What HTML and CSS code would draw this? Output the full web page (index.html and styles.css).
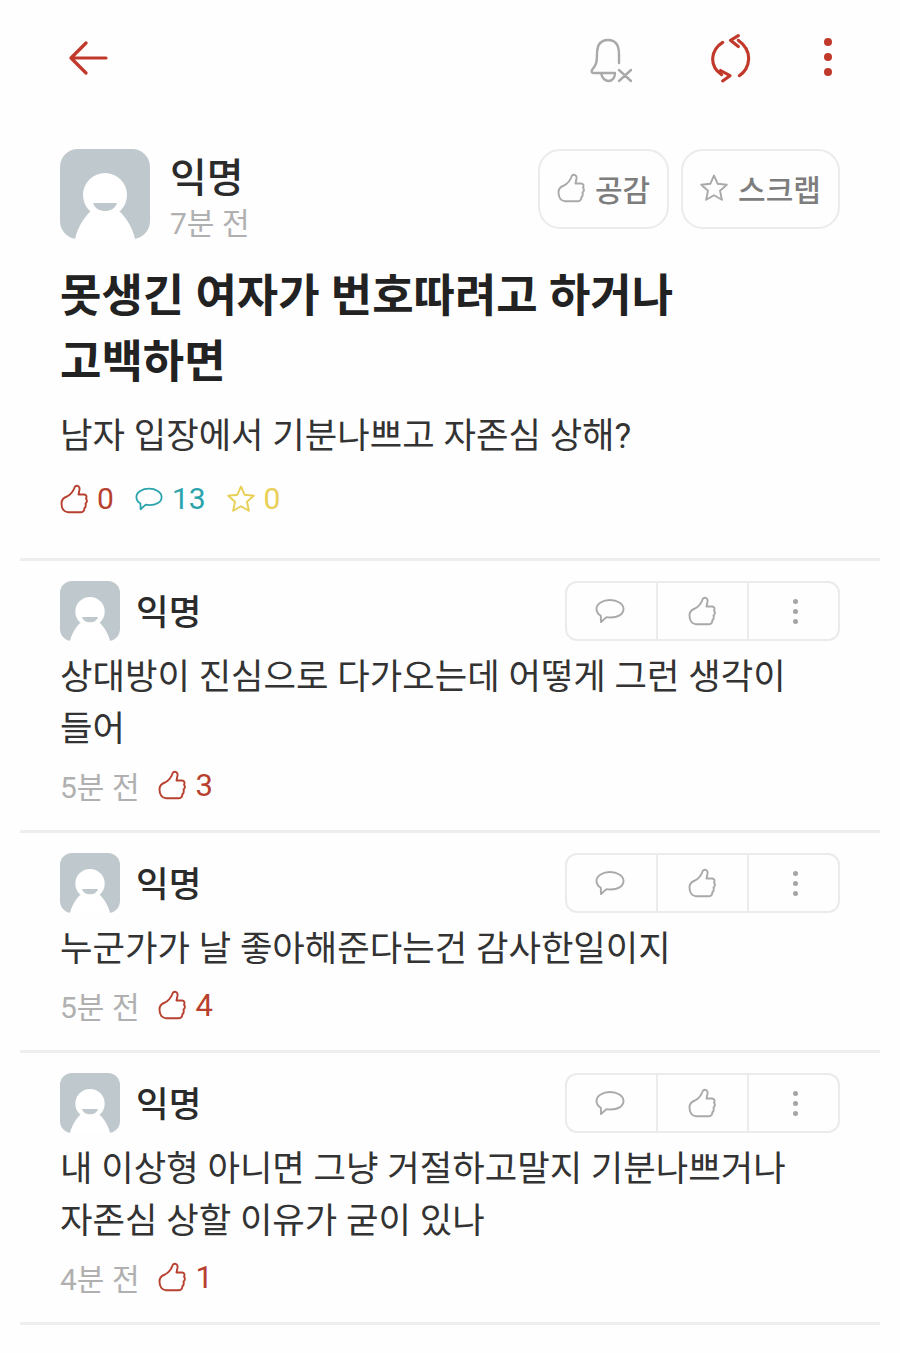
FILE: index.html
```html
<!DOCTYPE html>
<html lang="ko">
<head>
<meta charset="utf-8">
<title>익명</title>
<link rel="stylesheet" href="styles.css">
</head>
<body>
<svg class="defs" width="0" height="0" aria-hidden="true">
  <symbol id="thumb" viewBox="0 0 28 30"><path d="M1.500 19.500C1.500 15.500 4 13.500 7 12.500C11 10.500 13.500 7 15 2.500C17.500 .8 20 2.500 19.500 5.500L18.500 10.500L24 10.500C26.500 10.500 27 13 26 14.500C27.300 16.500 26.800 18.500 25.500 19.500C26 21.500 25.500 23.500 24.300 24.200C24.500 26.500 23 28.300 20.500 28.300L8 28.300C4 28.300 1.500 24.500 1.500 19.500Z" fill="none" stroke="currentColor" stroke-width="1.900" stroke-linejoin="round"/></symbol>
  <symbol id="bubble" viewBox="0 0 30 26"><path d="M15 2C22 2 28.500 5.500 28.500 11C28.500 16.500 22.500 19.500 15.500 19.500C14 19.500 12.500 19.400 11.500 19.100L6 24L5.800 17.700C3 16 1.500 13.800 1.500 11C1.500 5.500 8 2 15 2Z" fill="none" stroke="currentColor" stroke-width="1.900" stroke-linejoin="round"/></symbol>
  <symbol id="star" viewBox="1 1 28 28"><path d="M15 2.500L18.700 10.800L27.800 11.800L21 17.800L22.900 26.800L15 22.200L7.100 26.800L9 17.800L2.200 11.800L11.300 10.800Z" fill="none" stroke="currentColor" stroke-width="1.900" stroke-linejoin="round"/></symbol>
  <symbol id="avatar" viewBox="0 0 90 90"><rect width="90" height="90" rx="18" fill="#bfc8cc"/><circle cx="45" cy="46" r="22" fill="#fff"/><path d="M15 90C18 76 28 62 37 58L53 58C62 62 72 76 75 90Z" fill="#fff"/><path d="M33 54H57C55 60 50 62 45 62C40 62 35 60 33 54Z" fill="#bfc8cc"/></symbol>
</svg>

<header class="topbar">
  <svg class="icon-back" viewBox="0 0 40 34"><path d="M38 17H3M18 2L3 17L18 32" fill="none" stroke="currentColor" stroke-width="3.200" stroke-linecap="round" stroke-linejoin="round"/></svg>
  <div class="top-actions">
    <svg class="icon-bell" viewBox="0 0 46 46"><path d="M4 33C8 28 9 26 9 17C9 8 13 3 20 3C27 3 31 8 31 17V26M4 33C3 35 4 36 6 36H27M13 36C14 42 18 44 20.500 44C24 44 27 41 27 36M31 33L43 44M43 33L31 44" fill="none" stroke="currentColor" stroke-width="2.400" stroke-linecap="round" stroke-linejoin="round"/></svg>
    <svg class="icon-sync" viewBox="0 0 44 48"><path d="M14 9C3 16 0 31 13 40M12 36L21 41L14 46M30 41C40 34 44 18 29 7M29 2.500L21.500 7L29 13" fill="none" stroke="currentColor" stroke-width="3" stroke-linecap="round" stroke-linejoin="round"/></svg>
    <div class="dots dots-top"><i></i><i></i><i></i></div>
  </div>
</header>

<section class="post">
  <div class="post-head">
    <svg class="avatar-lg"><use href="#avatar"/></svg>
    <div class="post-author">
      <div class="author-name">익명</div>
      <div class="author-time">7분 전</div>
    </div>
    <div class="post-buttons">
      <button class="pill pill-like"><svg class="pill-icon"><use href="#thumb"/></svg>공감</button>
      <button class="pill pill-scrap"><svg class="pill-icon"><use href="#star"/></svg>스크랩</button>
    </div>
  </div>
  <h1 class="post-title">못생긴 여자가 번호따려고 하거나<br>고백하면</h1>
  <p class="post-body">남자 입장에서 기분나쁘고 자존심 상해?</p>
  <div class="post-stats">
    <span class="stat stat-red"><svg class="stat-icon"><use href="#thumb"/></svg>0</span>
    <span class="stat stat-teal"><svg class="stat-icon"><use href="#bubble"/></svg>13</span>
    <span class="stat stat-yellow"><svg class="stat-icon"><use href="#star"/></svg>0</span>
  </div>
</section>

<section class="comment">
  <div class="comment-head">
    <svg class="avatar-sm"><use href="#avatar"/></svg>
    <div class="comment-name">익명</div>
    <div class="comment-tools">
      <span class="tool"><svg class="tool-bubble"><use href="#bubble"/></svg></span>
      <span class="tool"><svg class="tool-thumb"><use href="#thumb"/></svg></span>
      <span class="tool"><span class="dots dots-sm"><i></i><i></i><i></i></span></span>
    </div>
  </div>
  <p class="comment-text">상대방이 진심으로 다가오는데 어떻게 그런 생각이<br>들어</p>
  <div class="comment-meta"><span class="meta-time">5분 전</span><span class="meta-like"><svg class="meta-icon"><use href="#thumb"/></svg>3</span></div>
</section>

<section class="comment">
  <div class="comment-head">
    <svg class="avatar-sm"><use href="#avatar"/></svg>
    <div class="comment-name">익명</div>
    <div class="comment-tools">
      <span class="tool"><svg class="tool-bubble"><use href="#bubble"/></svg></span>
      <span class="tool"><svg class="tool-thumb"><use href="#thumb"/></svg></span>
      <span class="tool"><span class="dots dots-sm"><i></i><i></i><i></i></span></span>
    </div>
  </div>
  <p class="comment-text">누군가가 날 좋아해준다는건 감사한일이지</p>
  <div class="comment-meta"><span class="meta-time">5분 전</span><span class="meta-like"><svg class="meta-icon"><use href="#thumb"/></svg>4</span></div>
</section>

<section class="comment">
  <div class="comment-head">
    <svg class="avatar-sm"><use href="#avatar"/></svg>
    <div class="comment-name">익명</div>
    <div class="comment-tools">
      <span class="tool"><svg class="tool-bubble"><use href="#bubble"/></svg></span>
      <span class="tool"><svg class="tool-thumb"><use href="#thumb"/></svg></span>
      <span class="tool"><span class="dots dots-sm"><i></i><i></i><i></i></span></span>
    </div>
  </div>
  <p class="comment-text">내 이상형 아니면 그냥 거절하고말지 기분나쁘거나<br>자존심 상할 이유가 굳이 있나</p>
  <div class="comment-meta"><span class="meta-time">4분 전</span><span class="meta-like"><svg class="meta-icon"><use href="#thumb"/></svg>1</span></div>
</section>
</body>
</html>
```

FILE: styles.css
```css
* { box-sizing: border-box; }
html, body { margin: 0; padding: 0; }
body {
  width: 900px;
  height: 1353px;
  overflow: hidden;
  background: #fefefe;
  color: #2b2b2b;
  font-family: "Roboto", "Noto Sans CJK KR", sans-serif;
}
.defs { display: block; height: 0; }
.topbar {
  height: 149px;
  padding: 41px 62px 0 68px;
  display: flex;
  justify-content: space-between;
  align-items: flex-start;
}
.icon-back { width: 40px; height: 34px; color: #c0392b; }
.top-actions { display: flex; align-items: flex-start; }
.icon-bell { width: 46px; height: 46px; color: #a9a9a9; margin-top: -4px; }
.icon-sync { width: 46px; height: 50px; color: #c0392b; margin: -8px 0 0 74px; }
.dots { display: flex; flex-direction: column; align-items: center; }
.dots i { display: block; border-radius: 50%; }
.dots-top { margin: -3px 6px 0 70px; gap: 7px; }
.dots-top i { width: 8px; height: 8px; background: #c0392b; }
.dots-sm { gap: 5px; margin-left: 3px; }
.dots-sm i { width: 5px; height: 5px; background: #a5a5a5; }

.post { height: 412px; margin: 0 20px; padding: 0 40px; border-bottom: 3px solid #eeeeee; }
.post-head { display: flex; align-items: flex-start; }
.avatar-lg { width: 90px; height: 90px; flex: none; }
.post-author { margin-left: 20px; padding-top: 5px; }
.author-name { font-size: 40px; line-height: 50px; font-weight: 500; color: #2b2b2b; }
.author-time { font-size: 30px; line-height: 36px; color: #b0b0b0; margin-top: 2px; }
.post-buttons { margin-left: auto; display: flex; gap: 12px; }
.pill {
  height: 80px;
  border: 2px solid #ebebeb;
  border-radius: 22px;
  background: #fefefe;
  color: #7d7d7d;
  font: 500 30px "Roboto", "Noto Sans CJK KR", sans-serif;
  display: flex;
  align-items: center;
  justify-content: center;
  gap: 10px;
  padding: 0 0 3px;
}
.pill-like { width: 131px; }
.pill-scrap { width: 159px; }
.pill-icon { width: 28px; height: 30px; color: #a9a9a9; }
.post-title { margin: 22px 0 0; font-size: 45px; line-height: 66px; font-weight: 700; color: #222; }
.post-body { margin: 14px 0 0; font-size: 35.3px; line-height: 52px; color: #333; }
.post-stats { display: flex; gap: 21px; margin-top: 17px; font-size: 30px; line-height: 40px; }
.stat { display: inline-flex; align-items: center; gap: 9px; }
.stat-icon { width: 28px; height: 30px; }
.stat-red { color: #b8402f; }
.stat-teal { color: #2ba3ad; }
.stat-yellow { color: #e8cf55; }

.comment { margin: 0 20px; padding: 20px 40px 0; border-bottom: 3px solid #eeeeee; }
.comment-head { display: flex; align-items: center; height: 60px; }
.avatar-sm { width: 60px; height: 60px; flex: none; }
.comment-name { margin-left: 16px; padding-bottom: 3px; font-size: 35.5px; font-weight: 500; color: #2b2b2b; }
.comment-tools { margin-left: auto; width: 275px; height: 60px; display: flex; border: 2px solid #ebebeb; border-radius: 12px; }
.tool { flex: 1; display: flex; align-items: center; justify-content: center; }
.tool + .tool { border-left: 2px solid #ebebeb; }
.tool-bubble { width: 30px; height: 26px; color: #a9a9a9; margin-right: 4px; }
.tool-thumb { width: 28px; height: 30px; color: #a9a9a9; margin-right: 2px; }
.comment-text { margin: 10px 0 0; font-size: 35.3px; line-height: 52px; color: #333; }
.comment-meta { display: flex; align-items: center; gap: 18px; margin: 10px 0 25px; height: 40px; font-size: 30px; }
.meta-time { color: #b0b0b0; }
.meta-like { display: inline-flex; align-items: center; gap: 10px; color: #b8402f; font-size: 31px; }
.meta-icon { width: 28px; height: 30px; }
```
